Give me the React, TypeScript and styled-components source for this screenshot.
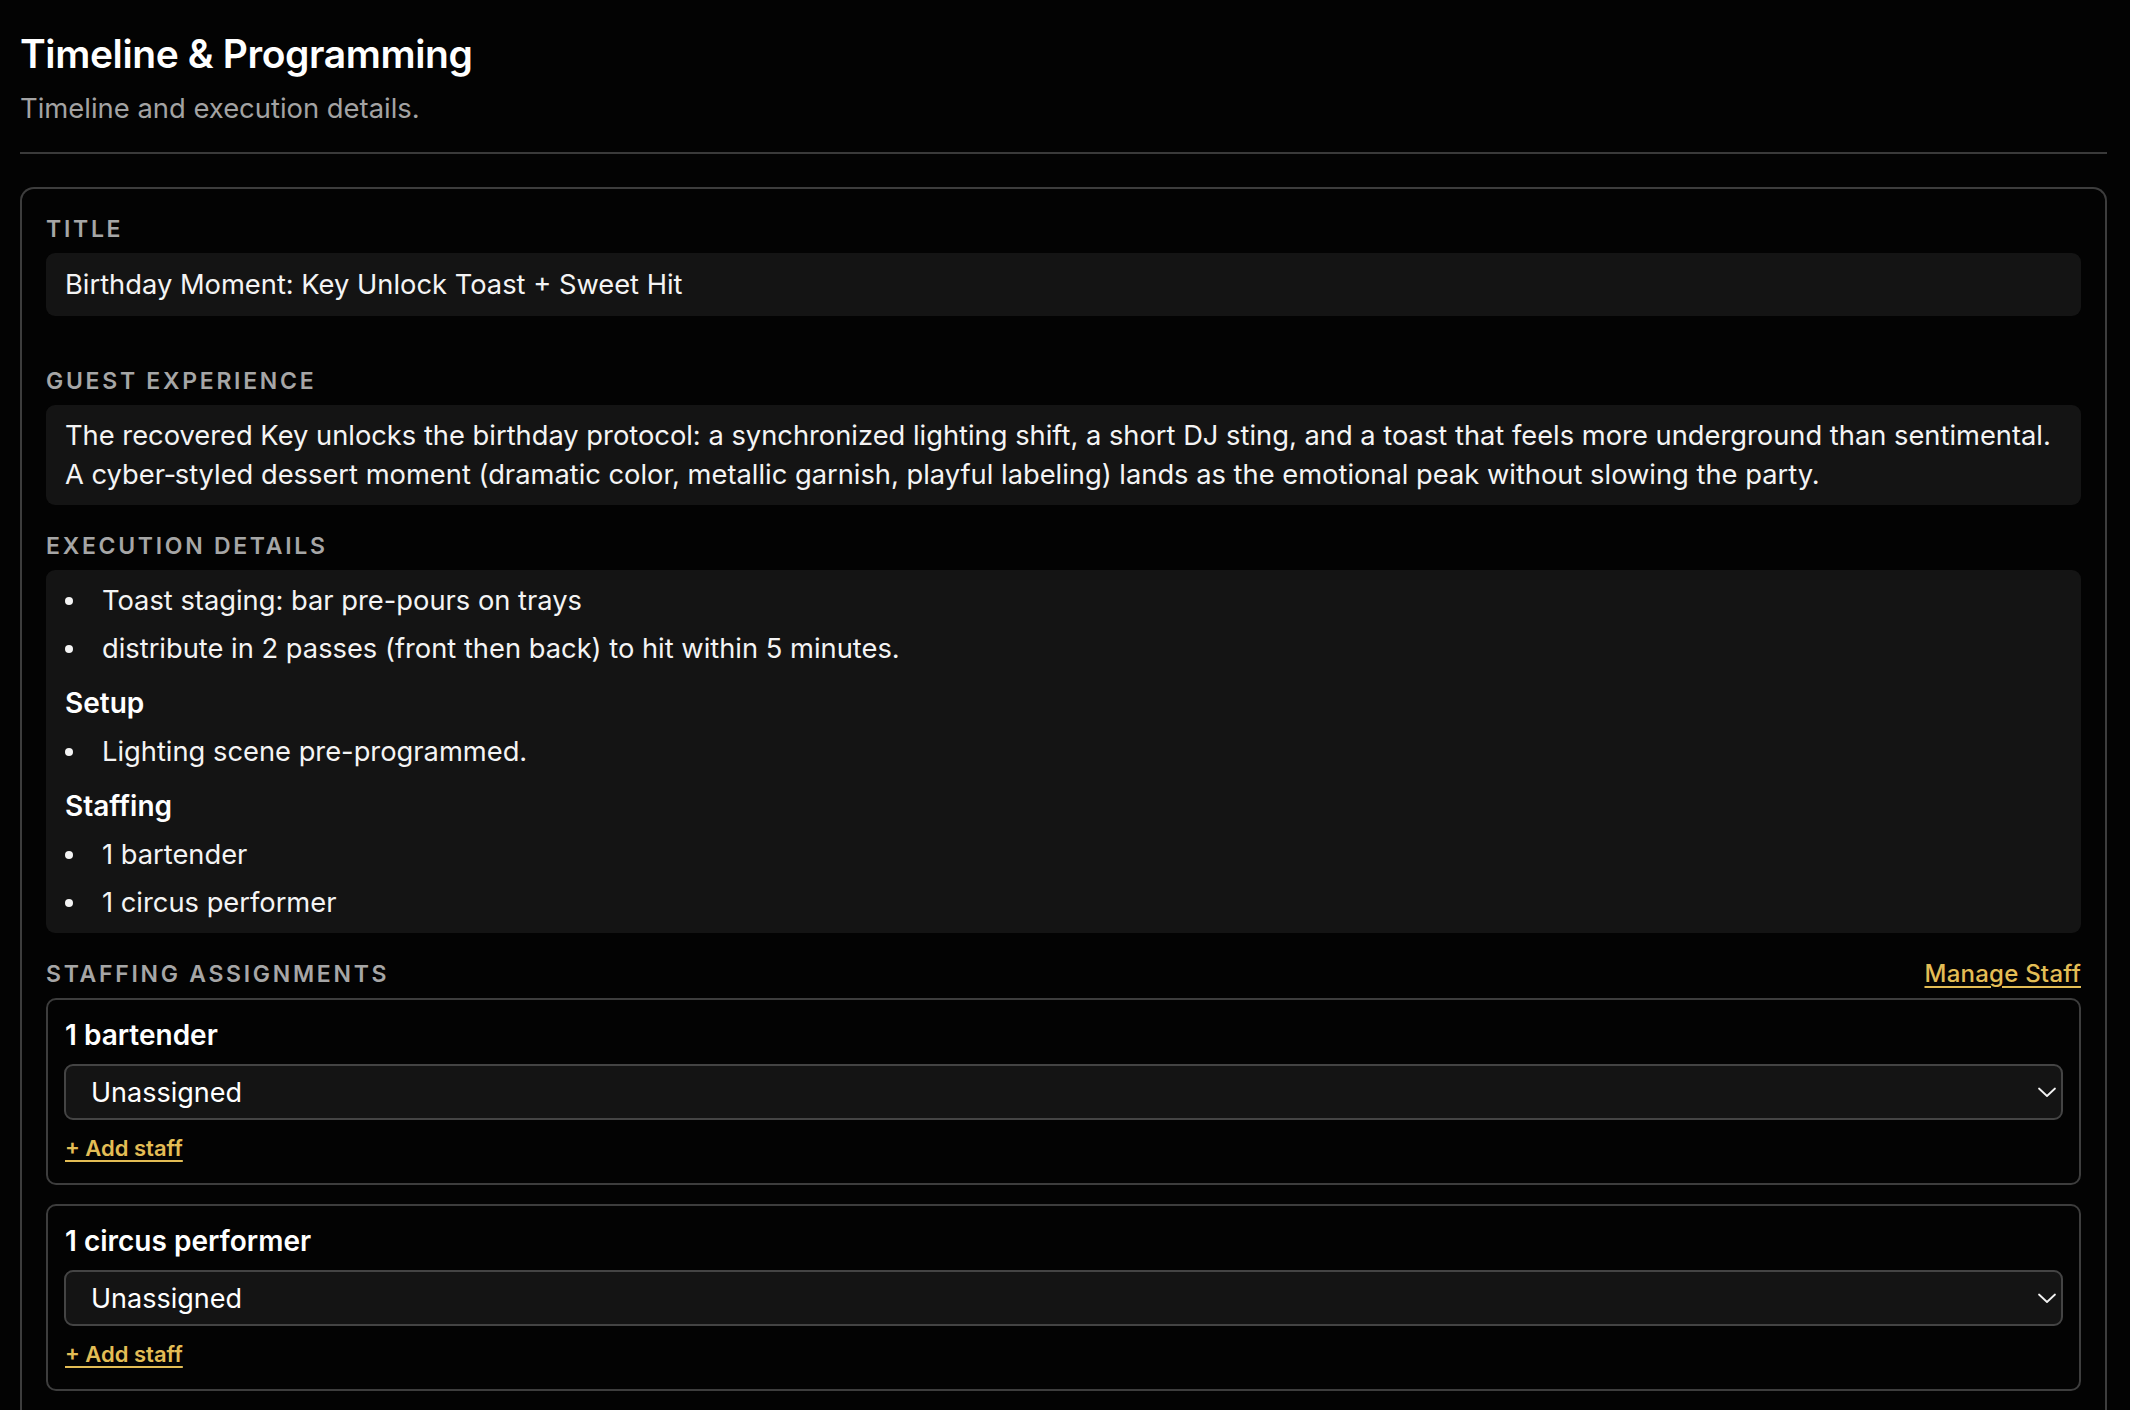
import React from "react";
import styled, { createGlobalStyle } from "styled-components";

const GlobalStyle = createGlobalStyle`
  html, body {
    margin: 0;
    padding: 0;
    background: #030303;
  }
  body {
    font-family: "Inter", "Noto Sans", "Liberation Sans", sans-serif;
    color: #f2f2f2;
    -webkit-font-smoothing: antialiased;
  }
  * { box-sizing: border-box; }
`;

const Page = styled.div`
  min-height: 1410px;
  padding: 31px 23px 0 20px;
  background: #030303;
`;

const Header = styled.header`
  display: flex;
  flex-direction: column;
  gap: 12px;
  padding-bottom: 24px;
`;

const Title = styled.h1`
  margin: 0;
  font-size: 39px;
  line-height: 46px;
  font-weight: 600;
  letter-spacing: -0.01em;
  color: #ffffff;
`;

const Subtitle = styled.p`
  margin: 0;
  font-size: 27.4px;
  line-height: 39px;
  color: #a3a3a3;
`;

const Divider = styled.hr`
  margin: 0 0 33px;
  border: none;
  height: 2px;
  background: #3a3a3a;
`;

const Card = styled.section`
  border: 2px solid #3d3d3d;
  border-bottom: none;
  border-radius: 14px 14px 0 0;
  padding: 27px 24px 40px;
  display: flex;
  flex-direction: column;
`;

const Field = styled.div<{ $spaceAfter?: number }>`
  display: flex;
  flex-direction: column;
  gap: 11px;
  margin-bottom: ${(p) => p.$spaceAfter ?? 28}px;
`;

const LabelRow = styled.div`
  display: flex;
  align-items: center;
  justify-content: space-between;
  height: 26px;
`;

const Label = styled.div`
  font-size: 23px;
  line-height: 26px;
  font-weight: 600;
  letter-spacing: 0.118em;
  text-transform: uppercase;
  color: #a6a6a6;
`;

const TextBox = styled.div<{ $padY?: number }>`
  background: #141414;
  border-radius: 9px;
  padding: ${(p) => p.$padY ?? 11}px 19px;
  font-size: 27.3px;
  line-height: 39px;
  color: #f4f4f4;
`;

const BulletList = styled.ul`
  list-style: none;
  margin: 0;
  padding: 0;
  display: flex;
  flex-direction: column;
  gap: 9px;
`;

const BulletItem = styled.li`
  display: flex;
  align-items: center;
  gap: 29px;
`;

const Dot = styled.span`
  flex: none;
  width: 8px;
  height: 8px;
  border-radius: 50%;
  background: #f4f4f4;
`;

const SubHeading = styled.div`
  margin: 16px 0 9px;
  font-size: 28px;
  line-height: 39px;
  font-weight: 600;
  color: #ffffff;
`;

const LinkButton = styled.a<{ $size?: number; $weight?: number }>`
  font-size: ${(p) => p.$size ?? 22}px;
  line-height: 26px;
  font-weight: ${(p) => p.$weight ?? 500};
  color: #e3bd55;
  text-decoration: underline;
  text-decoration-thickness: 2px;
  text-underline-offset: 4px;
  letter-spacing: 0.01em;
  cursor: pointer;
`;

const StaffStack = styled.div`
  display: flex;
  flex-direction: column;
  gap: 19px;
`;

const StaffCard = styled.div`
  border: 2px solid #3d3d3d;
  border-radius: 10px;
  padding: 16px 16px 18px;
  display: flex;
  flex-direction: column;
  align-items: flex-start;
`;

const RoleName = styled.div`
  font-size: 28px;
  line-height: 39px;
  font-weight: 600;
  color: #ffffff;
  margin-left: 1px;
  margin-bottom: 9px;
`;

const SelectWrap = styled.div`
  position: relative;
  width: 100%;
  margin-bottom: 12px;
`;

const Select = styled.select`
  appearance: none;
  -webkit-appearance: none;
  width: 100%;
  height: 56px;
  background: #141414;
  border: 2px solid #444444;
  border-radius: 9px;
  color: #ffffff;
  font-family: inherit;
  font-size: 27px;
  padding: 0 50px 0 25px;
  outline: none;
`;

const Chevron = styled.svg`
  position: absolute;
  right: 4px;
  top: 50%;
  transform: translateY(-50%);
  pointer-events: none;
`;

const AddStaff = styled(LinkButton)`
  margin-left: 1px;
  line-height: 33px;
  letter-spacing: 0;
`;

const roles = ["1 bartender", "1 circus performer"];

export default function App() {
  return (
    <>
      <GlobalStyle />
      <Page>
        <Header>
          <Title>Timeline &amp; Programming</Title>
          <Subtitle>Timeline and execution details.</Subtitle>
        </Header>
        <Divider />
        <Card>
          <Field $spaceAfter={52}>
            <Label>Title</Label>
            <TextBox $padY={12}>Birthday Moment: Key Unlock Toast + Sweet Hit</TextBox>
          </Field>
          <Field>
            <Label>Guest Experience</Label>
            <TextBox>
              The recovered Key unlocks the birthday protocol: a synchronized lighting shift, a short DJ sting, and a
              toast that feels more underground than sentimental. A cyber&#8209;styled dessert moment (dramatic color,
              metallic garnish, playful labeling) lands as the emotional peak without slowing the party.
            </TextBox>
          </Field>
          <Field>
            <Label>Execution Details</Label>
            <TextBox>
              <BulletList>
                <BulletItem>
                  <Dot />
                  Toast staging: bar pre-pours on trays
                </BulletItem>
                <BulletItem>
                  <Dot />
                  distribute in 2 passes (front then back) to hit within 5 minutes.
                </BulletItem>
              </BulletList>
              <SubHeading>Setup</SubHeading>
              <BulletList>
                <BulletItem>
                  <Dot />
                  Lighting scene pre-programmed.
                </BulletItem>
              </BulletList>
              <SubHeading>Staffing</SubHeading>
              <BulletList>
                <BulletItem>
                  <Dot />1 bartender
                </BulletItem>
                <BulletItem>
                  <Dot />1 circus performer
                </BulletItem>
              </BulletList>
            </TextBox>
          </Field>
          <Field>
            <LabelRow>
              <Label>Staffing Assignments</Label>
              <LinkButton $size={24}>Manage Staff</LinkButton>
            </LabelRow>
            <StaffStack>
              {roles.map((role) => (
                <StaffCard key={role}>
                  <RoleName>{role}</RoleName>
                  <SelectWrap>
                    <Select defaultValue="">
                      <option value="">Unassigned</option>
                    </Select>
                    <Chevron width="24" height="24" viewBox="0 0 24 24" fill="none">
                      <path d="M4 8.5l8 7.5 8-7.5" stroke="#f2f2f2" strokeWidth="1.8" strokeLinecap="round" strokeLinejoin="round" />
                    </Chevron>
                  </SelectWrap>
                  <AddStaff $size={22} $weight={600}>+ Add staff</AddStaff>
                </StaffCard>
              ))}
            </StaffStack>
          </Field>
        </Card>
      </Page>
    </>
  );
}
